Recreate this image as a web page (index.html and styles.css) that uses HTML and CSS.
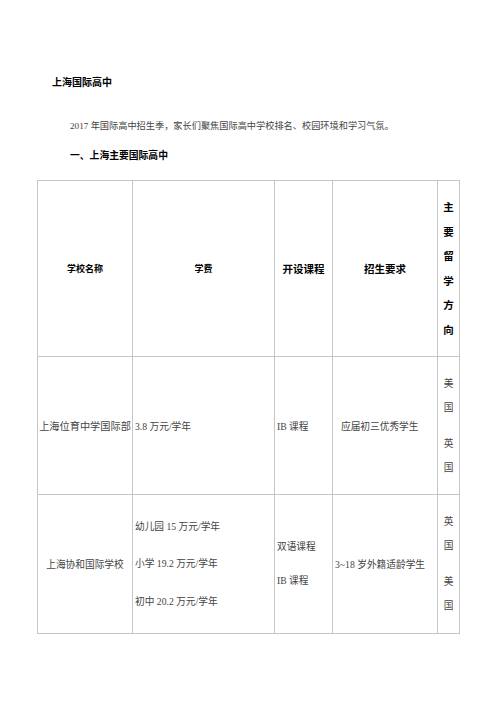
FILE: index.html
```html
<!DOCTYPE html>
<html lang="zh">
<head>
<meta charset="utf-8">
<title>上海国际高中</title>
<link rel="stylesheet" href="styles.css">
</head>
<body>
<div class="page">
  <h1 class="title">上海国际高中</h1>
  <p class="intro">2017 年国际高中招生季，家长们聚焦国际高中学校排名、校园环境和学习气氛。</p>
  <h2 class="section">一、上海主要国际高中</h2>
  <table class="schools">
    <colgroup>
      <col class="c1"><col class="c2"><col class="c3"><col class="c4"><col class="c5">
    </colgroup>
    <tr class="head">
      <th class="small">学校名称</th>
      <th class="small">学费</th>
      <th>开设课程</th>
      <th>招生要求</th>
      <th class="vert"><span>主</span><span>要</span><span>留</span><span>学</span><span>方</span><span>向</span></th>
    </tr>
    <tr class="r2">
      <td class="name wide">上海位育中学国际部</td>
      <td class="left">3.8 万元/学年</td>
      <td class="left">IB 课程</td>
      <td class="left indent">应届初三优秀学生</td>
      <td class="vert"><p><span>美</span><span>国</span></p><p><span>英</span><span>国</span></p></td>
    </tr>
    <tr class="r3">
      <td class="name">上海协和国际学校</td>
      <td class="left stack"><p>幼儿园 15 万元/学年</p><p>小学 19.2 万元/学年</p><p>初中 20.2 万元/学年</p></td>
      <td class="left stack2"><p>双语课程</p><p>IB 课程</p></td>
      <td class="left">3~18 岁外籍适龄学生</td>
      <td class="vert"><p><span>英</span><span>国</span></p><p><span>美</span><span>国</span></p></td>
    </tr>
  </table>
</div>
</body>
</html>
```

FILE: styles.css
```css
html, body {
  margin: 0;
  padding: 0;
  background: #ffffff;
}

.page {
  padding: 76px 0 0 37px;
  font-family: "Liberation Serif", "Noto Sans CJK SC", serif;
  color: #3a3a3a;
}

.title {
  margin: 0 0 29px 15px;
  font-family: "Liberation Sans", "Noto Sans CJK SC", sans-serif;
  font-size: 10px;
  line-height: 14px;
  font-weight: 700;
  color: #000;
}

.intro {
  margin: 0 0 16px 33px;
  font-size: 9.2px;
  line-height: 14px;
  color: #444;
}

.section {
  margin: 0 0 17px 33px;
  font-family: "Liberation Sans", "Noto Sans CJK SC", sans-serif;
  font-size: 9.8px;
  line-height: 14px;
  font-weight: 700;
  color: #000;
}

.schools {
  border-collapse: collapse;
  table-layout: fixed;
  width: 423px;
  font-size: 9.7px;
  color: #444;
}

.c1 { width: 95px; }
.c2 { width: 142px; }
.c3 { width: 58px; }
.c4 { width: 105px; }
.c5 { width: 22px; }

.schools th,
.schools td {
  border: 1px solid #c6c6c6;
  padding: 0 1px;
  vertical-align: middle;
  text-align: center;
}

.schools th {
  font-family: "Liberation Sans", "Noto Sans CJK SC", sans-serif;
  font-weight: 700;
  font-size: 10.5px;
  color: #000;
}

.schools th.small {
  font-size: 9px;
}

.head { height: 176px; }
.r2 { height: 138px; }
.r3 { height: 139px; }

.schools td.wide {
  font-size: 10.2px;
  padding: 0;
}

.schools td.left {
  text-align: left;
  padding-left: 2px;
}

.schools td.indent {
  padding-left: 8px;
}

.schools td p {
  margin: 0;
}

.stack p {
  line-height: 14px;
}
.schools td.stack p + p {
  margin-top: 23.5px;
}

.stack2 p {
  line-height: 14px;
}
.schools td.stack2 p + p {
  margin-top: 20px;
}

.vert span {
  display: block;
  line-height: 24.5px;
}

.schools td.vert p + p {
  margin-top: 12px;
}

.schools td.vert span {
  line-height: 24px;
}
```
